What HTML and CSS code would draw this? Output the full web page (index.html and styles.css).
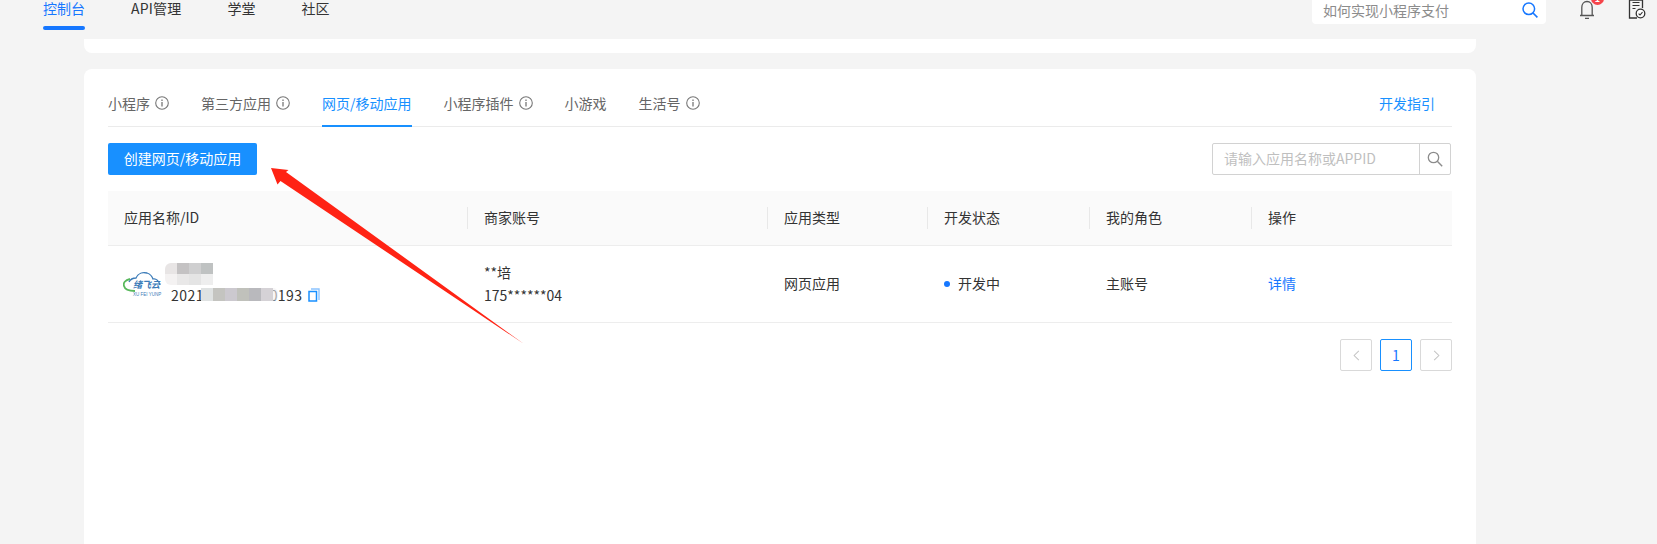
FILE: index.html
```html
<!DOCTYPE html>
<html lang="zh-CN">
<head>
<meta charset="utf-8">
<title>控制台</title>
<link rel="stylesheet" href="styles.css">
</head>
<body>
<header class="topbar">
  <nav class="mainnav">
    <a class="navitem active">控制台</a>
    <a class="navitem wide">API管理</a>
    <a class="navitem">学堂</a>
    <a class="navitem">社区</a>
  </nav>
  <div class="topsearch">
    <span class="topsearch-text">如何实现小程序支付</span>
    <svg class="topsearch-icon" viewBox="0 0 16 16" width="16" height="16"><circle cx="6.800" cy="6.800" r="5.800" fill="none" stroke="#1677ff" stroke-width="1.500"/><path d="M11 11l4.400 4.400" stroke="#1677ff" stroke-width="1.600" fill="none"/></svg>
  </div>
  <div class="bell">
    <svg viewBox="0 0 16 20" width="16" height="20"><path d="M1 15.500h14M2.800 15.500V7.500C2.800 4 5 1.500 8 1.500s5.200 2.500 5.200 6v8M6 18.300h4" fill="none" stroke="#555" stroke-width="1.300"/></svg>
    <span class="badge">1</span>
  </div>
  <svg class="docicon" viewBox="0 0 18 19" width="18" height="19"><path d="M9 18H1.500V0H14.500V8" fill="none" stroke="#333" stroke-width="1.300"/><path d="M4.500 2.500h7M4.500 5.500h7M4.500 8.500h3" stroke="#333" stroke-width="1.200"/><circle cx="12.500" cy="13.500" r="4.300" fill="#fff" stroke="#333" stroke-width="1.300"/><path d="M10.600 13.700l1.400 1.300 2.500-2.800" fill="none" stroke="#333" stroke-width="1.100"/></svg>
</header>

<div class="card-stub"></div>

<main class="card">
  <div class="tabs">
    <a class="tab">小程序<svg class="info"><use href="#i-info"/></svg></a>
    <a class="tab">第三方应用<svg class="info"><use href="#i-info"/></svg></a>
    <a class="tab current">网页/移动应用</a>
    <a class="tab">小程序插件<svg class="info"><use href="#i-info"/></svg></a>
    <a class="tab">小游戏</a>
    <a class="tab">生活号<svg class="info"><use href="#i-info"/></svg></a>
    <a class="guide">开发指引</a>
  </div>

  <div class="toolbar">
    <button class="primary">创建网页/移动应用</button>
    <div class="searchbox">
      <span class="searchbox-text">请输入应用名称或APPID</span>
      <span class="searchbox-btn">
        <svg viewBox="0 0 16 16" width="16" height="16"><circle cx="6.500" cy="6.500" r="5.200" fill="none" stroke="#8c8c8c" stroke-width="1.300"/><path d="M10.300 10.300l4.900 4.900" stroke="#8c8c8c" stroke-width="1.400"/></svg>
      </span>
    </div>
  </div>

  <div class="table">
    <div class="row head">
      <div class="cell">应用名称/ID</div>
      <div class="cell">商家账号</div>
      <div class="cell">应用类型</div>
      <div class="cell">开发状态</div>
      <div class="cell">我的角色</div>
      <div class="cell">操作</div>
    </div>
    <div class="row body">
      <div class="cell app">
        <div class="logo">
          <svg viewBox="0 0 38 27" width="38" height="27"><path d="M6 11C8 7 11 7 13 7C15 2 20 1 24 2C27 3 29 5 30 8C33 7 36 10 37 14" fill="none" stroke="#3b7bb8" stroke-width="1.300"/><path d="M7 8C2 9 0 12 1 15C2 19 6 20 12 20" fill="none" stroke="#58b85c" stroke-width="1.800"/></svg>
          <span class="logo-name">绪飞云</span>
          <span class="logo-sub">XU FEI YUNP</span>
        </div>
        <div class="appinfo">
          <div class="mosaic name">
            <i class="m1"></i><i class="m2"></i><i class="m3"></i><i class="m4"></i>
            <i class="m5"></i><i class="m6"></i><i class="m7"></i><i class="m8"></i>
          </div>
          <div class="appid">
            <span class="idtext">2021000000000193</span>
            <svg class="copy" viewBox="0 0 12 14" width="12" height="14"><path d="M3 1h8v11" fill="none" stroke="#8cc4ff" stroke-width="1.400"/><path d="M1 3.500h7.500V13H1z" fill="none" stroke="#1890ff" stroke-width="1.500"/></svg>
            <div class="mosaic idblur">
              <i class="n1"></i><i class="n2"></i><i class="n3"></i><i class="n4"></i><i class="n5"></i><i class="n6"></i><i class="n7"></i>
            </div>
          </div>
        </div>
      </div>
      <div class="cell two">
        <div>**培</div>
        <div>175******04</div>
      </div>
      <div class="cell">网页应用</div>
      <div class="cell"><span class="dot"></span>开发中</div>
      <div class="cell">主账号</div>
      <div class="cell"><a class="link">详情</a></div>
    </div>
  </div>

  <div class="pager">
    <span class="page off"><svg viewBox="0 0 8 14" width="7" height="11"><path d="M7 1L1 7l6 6" fill="none" stroke="#c4c4c4" stroke-width="1.300"/></svg></span>
    <span class="page on">1</span>
    <span class="page off"><svg viewBox="0 0 8 14" width="7" height="11"><path d="M1 1l6 6-6 6" fill="none" stroke="#c4c4c4" stroke-width="1.300"/></svg></span>
  </div>
</main>

<svg class="arrow" viewBox="0 0 1657 544" width="1657" height="544"><polygon points="271,168 288.500,170 286,172 524,344 280.500,181 277.500,184.500" fill="#ff2314"/></svg>

<svg class="defs" width="0" height="0"><defs><symbol id="i-info" viewBox="0 0 14 14"><circle cx="7" cy="7" r="6.300" fill="none" stroke="#777" stroke-width="1.100"/><path d="M7 6v4.500M7 3.500v1.400" stroke="#777" stroke-width="1.300"/></symbol></defs></svg>
</body>
</html>
```

FILE: styles.css
```css
* { box-sizing: border-box; }
html, body { margin: 0; height: 100%; }
body {
  position: relative;
  height: 544px;
  overflow: hidden;
  background: #f4f4f4;
  color: #333;
  font: 14px/22px "Noto Sans CJK SC", "Liberation Sans", sans-serif;
}
a { cursor: pointer; }

.topbar { display: flex; align-items: flex-start; height: 39px; overflow: hidden; }
.mainnav { display: flex; flex: 1; padding-left: 43px; }
.navitem { position: relative; display: block; height: 30px; margin-right: 46px; line-height: 17px; color: #333; }
.navitem.wide { letter-spacing: .2px; }
.navitem.active { color: #1677ff; }
.navitem.active::after { content: ""; position: absolute; left: 0; right: 0; bottom: 0; height: 4px; border-radius: 2px; background: #1677ff; }
.topsearch { display: flex; align-items: center; justify-content: space-between; width: 234px; height: 34px; margin-top: -10px; padding: 5px 8px 0 11px; background: #fff; border-radius: 4px; color: #8c8c8c; }
.topsearch-text { line-height: 18px; }
.bell { position: relative; width: 16px; height: 20px; margin-left: 33px; }
.bell svg { display: block; }
.badge { position: absolute; left: 12px; top: -8px; width: 13px; height: 13px; border-radius: 50%; background: #f5444a; color: #fff; font-size: 9px; line-height: 13px; font-weight: 700; text-align: center; }
.docicon { margin: 0 11px 0 33px; }

.card-stub { height: 14px; margin: 0 181px 0 84px; background: #fff; border-radius: 0 0 8px 8px; }
.card { height: 475px; margin: 16px 181px 0 84px; padding: 0 24px; background: #fff; border-radius: 8px 8px 0 0; }

.tabs { display: flex; align-items: stretch; gap: 32px; height: 58px; border-bottom: 1px solid #ebebeb; }
.tab { position: relative; display: flex; align-items: center; height: 58px; padding-top: 10px; color: #666; }
.tab.current { color: #1890ff; }
.tab.current::after { content: ""; position: absolute; left: 0; right: 0; bottom: 0; height: 2px; background: #1890ff; }
.info { width: 14px; height: 14px; margin-left: 5px; }
.guide { margin-left: auto; margin-right: 17px; padding-top: 23px; color: #1890ff; }

.toolbar { display: flex; justify-content: space-between; margin-top: 16px; height: 32px; padding-right: 1px; }
.primary { width: 149px; height: 32px; padding: 0 0 2px; border: 0; border-radius: 2px; background: #1890ff; color: #fff; font: inherit; }
.searchbox { display: flex; width: 239px; height: 32px; border: 1px solid #d2d2d2; border-radius: 2px; }
.searchbox-text { flex: 1; padding: 3px 0 0 11px; color: #bfbfbf; border-right: 1px solid #d2d2d2; }
.searchbox-btn { display: flex; align-items: center; justify-content: center; width: 30px; }

.table { margin-top: 16px; }
.row { display: grid; grid-template-columns: 360px 300px 160px 162px 162px 200px; align-items: center; }
.head { height: 55px; background: #fafafa; border-bottom: 1px solid #ededed; }
.body { height: 77px; border-bottom: 1px solid #ededed; }
.cell { position: relative; padding: 0 0 2px 16px; color: #333; }
.head .cell:not(:first-child)::before { content: ""; position: absolute; left: -1px; top: 1px; bottom: 1px; width: 1px; background: #e8e8e8; }
.body .app { display: flex; align-items: center; padding: 0 0 0 15px; height: 76px; }
.body .two { padding-bottom: 0; line-height: 23px; }
.logo { position: relative; flex: none; width: 38px; height: 27px; }
.logo svg { display: block; }
.logo-name { position: absolute; left: 10px; top: 8px; font-size: 9px; line-height: 12px; font-style: italic; font-weight: 700; color: #3b7bb8; white-space: nowrap; }
.logo-sub { position: absolute; left: 10px; top: 21px; font: 4.500px/6px "Liberation Sans", sans-serif; color: #3b7bb8; white-space: nowrap; }
.appinfo { position: relative; margin-left: 10px; padding-top: 22px; }
.appid { position: relative; display: flex; align-items: center; gap: 5px; white-space: nowrap; }
.idtext { letter-spacing: .45px; }
.copy { flex: none; }
.mosaic { position: absolute; display: grid; }
.mosaic i { display: block; }
.name { left: -6px; top: 1px; grid-template-columns: repeat(4, 12px); grid-auto-rows: 11px; }
.m1 { background: #e8e5e5; border-radius: 6px 0 0 0; }
.m2 { background: #c4c2c3; }
.m3 { background: #cfcfd0; }
.m4 { background: #bfc2c2; }
.m5 { background: #f4f2f2; border-radius: 0 0 0 6px; }
.m6 { background: #e9e8e8; }
.m7 { background: #e4e4e4; }
.m8 { background: #eeeeee; }
.idblur { left: 30px; top: 4px; grid-template-columns: repeat(6, 12px) 5px; grid-auto-rows: 13px; }
.n1 { background: #dfe2e2; }
.n2 { background: #c4c4c0; }
.n3 { background: #ccc9cf; }
.n4 { background: #c0c1bb; }
.n5 { background: #b9b9bd; }
.n6 { background: #d5d2d6; }
.n7 { background: rgba(242, 240, 242, .6); border-radius: 0 6px 6px 0; }
.dot { display: inline-block; width: 6px; height: 6px; margin-right: 8px; border-radius: 50%; background: #1677ff; vertical-align: 2px; }
.link { color: #1677ff; }

.pager { display: flex; justify-content: flex-end; gap: 8px; margin-top: 16px; }
.page { display: flex; align-items: center; justify-content: center; width: 32px; height: 32px; border: 1px solid #d9d9d9; border-radius: 2px; color: #1677ff; }
.page.on { border-color: #1890ff; }

.arrow { position: absolute; left: 0; top: 0; pointer-events: none; }
.defs { position: absolute; }
```
